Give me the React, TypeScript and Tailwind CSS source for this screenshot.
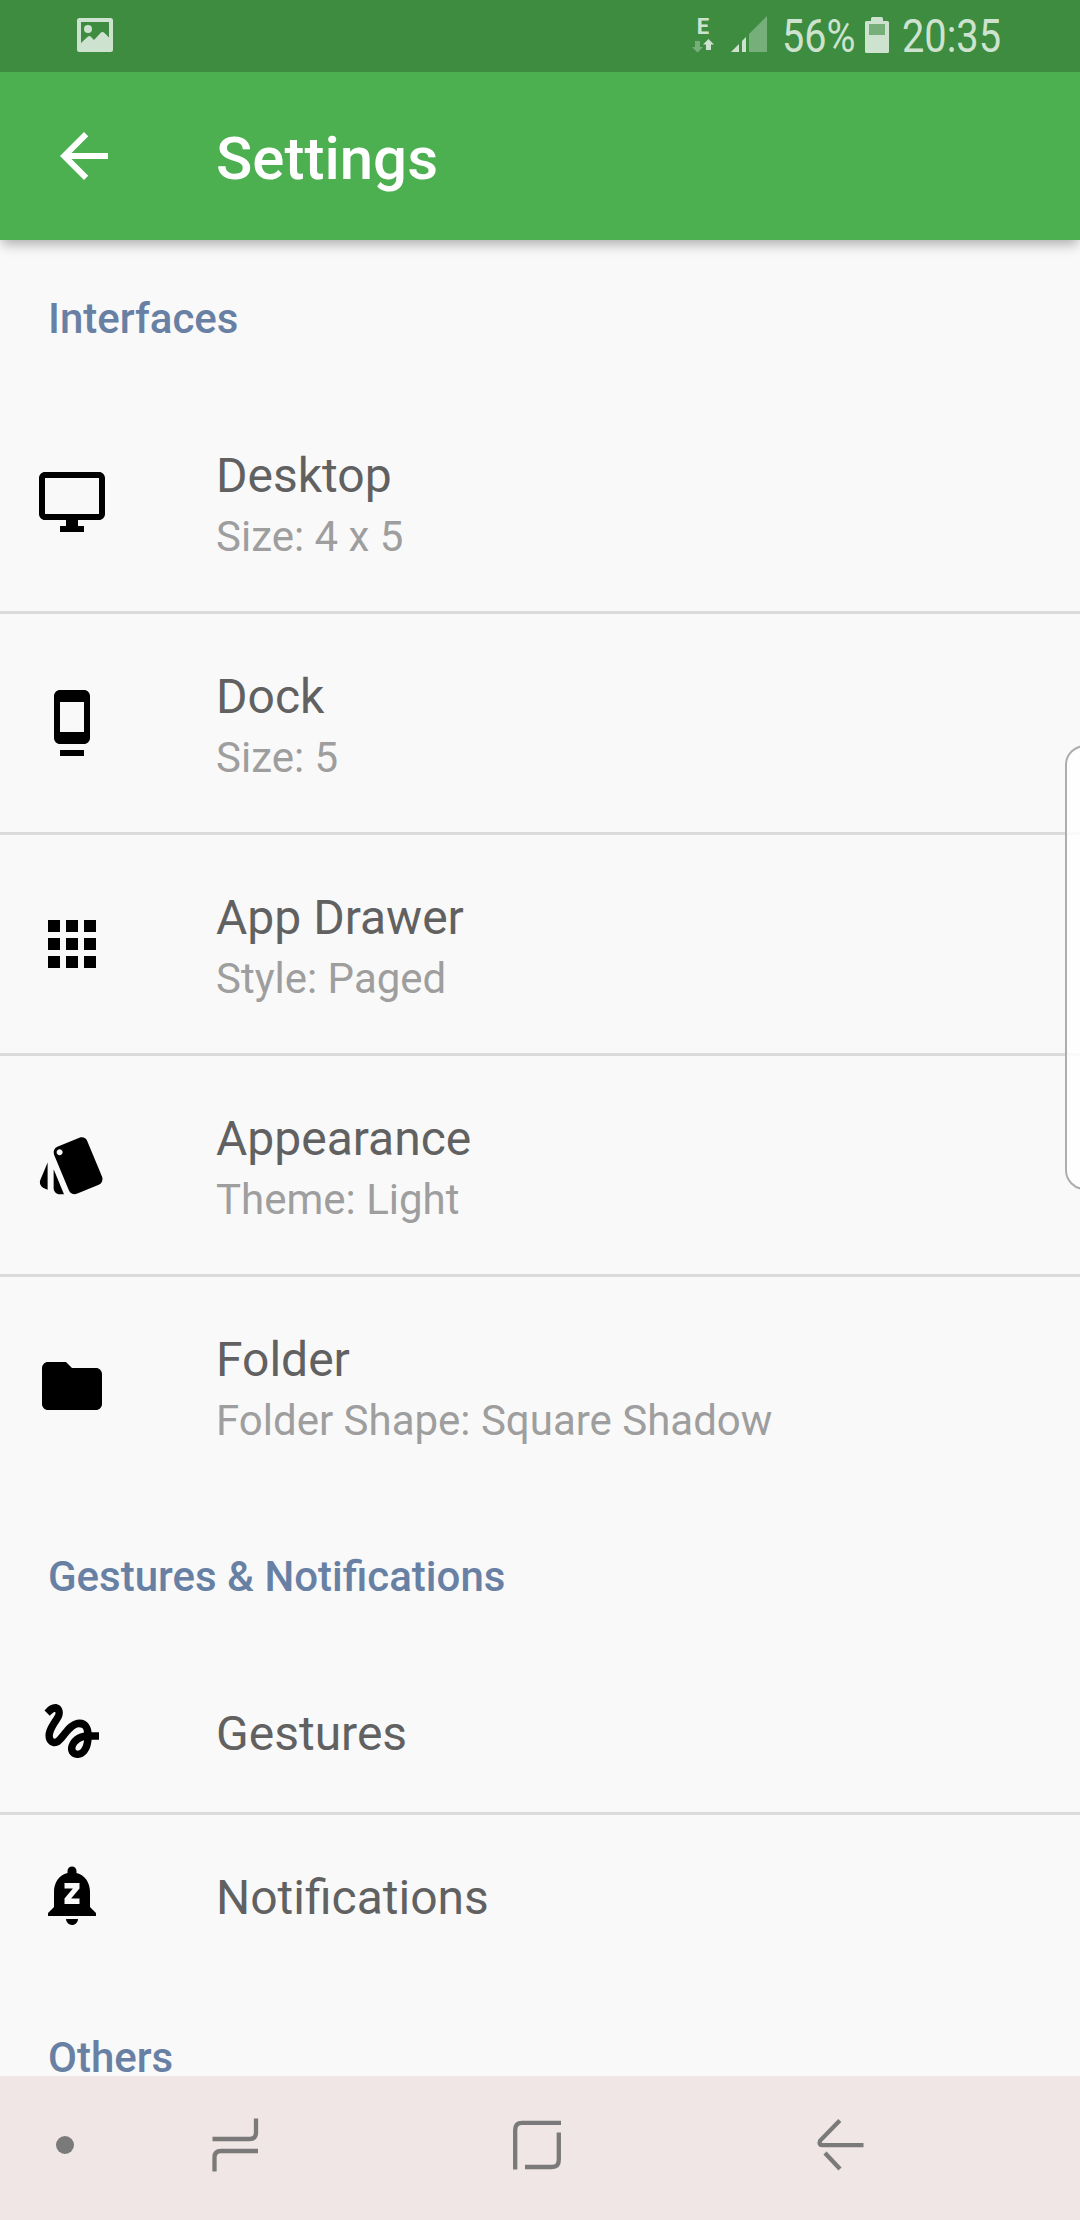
import type { ComponentType } from "react";
import {
  MdApps,
  MdArrowBack,
  MdDock,
  MdFolder,
  MdGesture,
  MdNotificationsPaused,
  MdStyle,
} from "react-icons/md";

type Item = {
  icon: ComponentType<{ className?: string }>;
  title: string;
  summary?: string;
};

type Section = { title: string; items: Item[] };

function DesktopIcon({ className }: { className?: string }) {
  return (
    <svg className={className} viewBox="0 0 24 24" fill="currentColor">
      <path d="M21 2H3c-1.100 0-2 .9-2 2v12c0 1.100.9 2 2 2h7v2H8v2h8v-2h-2v-2h7c1.100 0 2-.9 2-2V4c0-1.100-.9-2-2-2zm0 14H3V4h18v12z" />
    </svg>
  );
}

const sections: Section[] = [
  {
    title: "Interfaces",
    items: [
      { icon: DesktopIcon, title: "Desktop", summary: "Size: 4 x 5" },
      { icon: MdDock, title: "Dock", summary: "Size: 5" },
      { icon: MdApps, title: "App Drawer", summary: "Style: Paged" },
      { icon: MdStyle, title: "Appearance", summary: "Theme: Light" },
      { icon: MdFolder, title: "Folder", summary: "Folder Shape: Square Shadow" },
    ],
  },
  {
    title: "Gestures & Notifications",
    items: [
      { icon: MdGesture, title: "Gestures" },
      { icon: MdNotificationsPaused, title: "Notifications" },
    ],
  },
  { title: "Others", items: [] },
];

function StatusBar() {
  return (
    <div className="relative z-10 flex h-[72px] shrink-0 items-start bg-[#3d8c40] text-[#cee3cf]">
      <svg className="mt-[18px] ml-[77px] h-[34px] w-9" viewBox="0 0 36 34" fill="currentColor">
        <path
          fillRule="evenodd"
          d="M2.500 0h31A2.500 2.500 0 0 1 36 2.500v29a2.500 2.500 0 0 1-2.500 2.500h-31A2.500 2.500 0 0 1 0 31.500v-29A2.500 2.500 0 0 1 2.500 0zM4 4v21l7-6.500q1.300-1.200 2.600 0L17 22l6.500-7q2-1.800 4 0L32 19.500V4z"
        />
        <circle cx="11" cy="11" r="4" />
      </svg>
      <div className="ml-auto flex items-start">
        <div className="mt-[18px] w-[22px]">
          <div className="h-[17px] text-center font-['Roboto'] text-[22px] leading-[17px] font-bold">E</div>
          <svg className="mt-1 h-[14px] w-[22px]" viewBox="0 0 22 14" fill="currentColor">
            <path opacity=".4" d="M3 2h5v6h3l-5.500 5.500L0 8h3z" />
            <path d="M16.500 0 22 5.500h-3V11h-5V5.500h-3z" />
          </svg>
        </div>
        <svg className="mt-4 ml-[17px] h-9 w-9" viewBox="0 0 36 36" fill="currentColor">
          <path d="M0 36 8 28v8zM11 25l4-4v15h-4z" />
          <path opacity=".4" d="M18 18 36 0v36H18z" />
        </svg>
        <span className="ml-[15px] w-[72px] origin-left scale-x-[.86] pt-[9px] font-['Roboto'] text-[46px] leading-[54px] whitespace-nowrap">
          56%
        </span>
        <svg className="mt-[17px] ml-[11px] h-9 w-6" viewBox="0 0 24 36" fill="currentColor">
          <path
            fillRule="evenodd"
            d="M7.500 0h9q1.500 0 1.500 1.500V4h4.500Q24 4 24 5.500v29q0 1.500-1.500 1.500h-21Q0 36 0 34.500v-29Q0 4 1.500 4H6V1.500Q6 0 7.500 0zM4 7v11h16V7z"
          />
          <path opacity=".4" d="M4 7h16v11H4z" />
        </svg>
        <span className="ml-[13px] w-[178px] origin-left scale-x-[.865] pt-[9px] font-['Roboto'] text-[46px] leading-[54px] whitespace-nowrap">
          20:35
        </span>
      </div>
    </div>
  );
}

function Toolbar() {
  return (
    <header className="relative flex h-[168px] shrink-0 items-center bg-[#4caf50] text-white shadow-[0_6px_12px_-2px_rgba(0,0,0,0.32)]">
      <MdArrowBack className="ml-12 size-[72px]" />
      <h1 className="ml-24 pt-[5px] text-[60px] leading-[70px] font-medium">Settings</h1>
    </header>
  );
}

function Row({ item }: { item: Item }) {
  const Icon = item.icon;
  return (
    <li className={item.summary ? "box-content flex h-[218px] items-center" : "box-content flex h-[161px] items-center"}>
      <Icon className={item.summary ? "ml-9 size-[72px] text-black" : "mb-0.5 ml-9 size-[72px] text-black"} />
      <div className={item.summary ? "ml-[108px] pt-[9px]" : "ml-[108px] pt-1"}>
        <div className="text-[48px] leading-[60px] text-[#616161]">{item.title}</div>
        {item.summary && <div className="text-[42px] leading-[61px] text-[#9e9e9e]">{item.summary}</div>}
      </div>
    </li>
  );
}

function NavBar() {
  return (
    <nav className="flex h-36 shrink-0 items-start bg-[#f0e6e5] text-[#7a7a7a]">
      <div className="mt-[60px] ml-14 size-[18px] rounded-full bg-current" />
      <svg className="mt-[42px] ml-[138px] h-[54px] w-[47px]" viewBox="0 0 47 54" fill="none" stroke="currentColor" strokeWidth="4.300">
        <path d="M.5 21H37.500q6.500 0 6.500-6.500V.5M46 33H9q-6.500 0-6.500 6.500v14" />
      </svg>
      <svg className="mt-11 ml-[254px] h-[50px] w-12" viewBox="0 0 48 50" fill="none" stroke="currentColor" strokeWidth="4.300">
        <path d="M2.200 49.500V10Q2.200 2.800 9 2.800h39M45.800 12.500V40q0 7-6.800 7H12" />
      </svg>
      <svg className="mt-[42px] ml-[256px] h-[54px] w-12" viewBox="0 0 48 54" fill="none" stroke="currentColor" strokeWidth="4.300">
        <path d="M22.800 2.500 3.200 22.600Q1.500 27.200 5 27.200h41.500M8 35l15 16" />
      </svg>
    </nav>
  );
}

export default function App() {
  return (
    <div className="relative flex h-[2220px] w-[1080px] flex-col overflow-hidden bg-[#f9f9f9] font-['Roboto',sans-serif]">
      <StatusBar />
      <Toolbar />
      <main className="min-h-0 flex-1 overflow-hidden">
        {sections.map((section) => (
          <section key={section.title} className="border-b-[3px] border-transparent">
            <h2 className="h-[153px] pt-[61px] pl-12 text-[42px] leading-[36px] font-medium text-[#6880a4]">
              {section.title}
            </h2>
            <ul className="divide-y-[3px] divide-[#dbdbdb]">
              {section.items.map((item) => (
                <Row key={item.title} item={item} />
              ))}
            </ul>
          </section>
        ))}
      </main>
      <NavBar />
      {/* Edge panel handle overlapping the right side of the list */}
      <div className="absolute top-[745px] -right-[12px] h-[445px] w-[27px] rounded-l-[20px] border-2 border-[#adadad] bg-white/85" />
    </div>
  );
}
